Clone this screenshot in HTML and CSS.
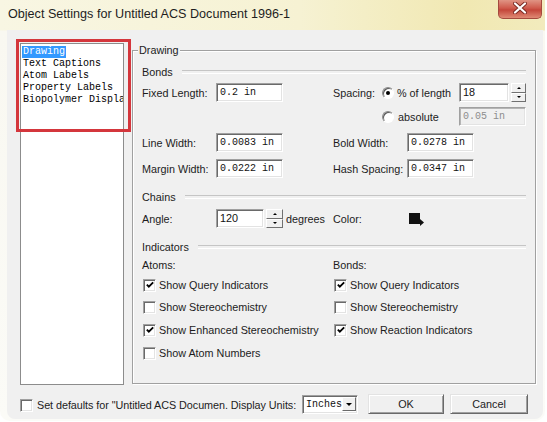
FILE: index.html
```html
<!DOCTYPE html>
<html>
<head>
<meta charset="utf-8">
<title>Object Settings</title>
<link rel="stylesheet" href="styles.css">
</head>
<body>
<div class="window">
  <div class="titlebar">
    <span class="title">Object Settings for Untitled ACS Document 1996-1</span>
    <span class="close">
      <svg width="14" height="12" viewBox="0 0 14 12"><path d="M2 1.5 L12 10.5 M12 1.5 L2 10.5" stroke="#7a2a22" stroke-width="4" stroke-linecap="round"/><path d="M2 1.5 L12 10.5 M12 1.5 L2 10.5" stroke="#ffffff" stroke-width="2.2" stroke-linecap="round"/></svg>
    </span>
  </div>
  <div class="client">
    <div class="main">
      <div class="listbox">
        <div class="item sel">Drawing</div>
        <div class="item">Text Captions</div>
        <div class="item">Atom Labels</div>
        <div class="item">Property Labels</div>
        <div class="item">Biopolymer Display</div>
      </div>
      <div class="group">
        <div class="legend">Drawing</div>

        <div class="heading mt-bonds">Bonds</div>

        <div class="row mt-r1">
          <span class="lbl">Fixed Length:</span>
          <span class="field w67 mono">0.2 in</span>
          <span class="lbl lbl-spacing">Spacing:</span>
          <span class="radio on"></span>
          <span class="rtext w62">% of length</span>
          <span class="field w50">18</span>
          <span class="spin w15"><i class="up"></i><i class="dn"></i></span>
        </div>

        <div class="row mt-r2">
          <span class="pad240"></span>
          <span class="radio"></span>
          <span class="rtext2">absolute</span>
          <span class="field w67 mono disabled">0.05 in</span>
        </div>

        <div class="row mt-r3">
          <span class="lbl">Line Width:</span>
          <span class="field w67 mono">0.0083 in</span>
          <span class="lbl lbl-right">Bold Width:</span>
          <span class="field w67 mono">0.0278 in</span>
        </div>

        <div class="row mt-r4">
          <span class="lbl">Margin Width:</span>
          <span class="field w67 mono">0.0222 in</span>
          <span class="lbl lbl-right">Hash Spacing:</span>
          <span class="field w67 mono">0.0347 in</span>
        </div>

        <div class="heading mt-chains">Chains</div>

        <div class="row mt-angle">
          <span class="lbl">Angle:</span>
          <span class="field w48">120</span>
          <span class="spin w17"><i class="up"></i><i class="dn"></i></span>
          <span class="degrees">degrees</span>
          <span class="lbl-color">Color:</span>
          <svg class="swatch" width="17" height="14" viewBox="0 0 17 14"><rect x="0" y="0" width="11" height="11" fill="#111"/><path d="M11 6 L15 9.5 L11 13 Z" fill="#111"/></svg>
        </div>

        <div class="heading mt-ind">Indicators</div>

        <div class="crow mt-sub">
          <span class="cell">Atoms:</span>
          <span class="cell">Bonds:</span>
        </div>

        <div class="crow mt-c1">
          <span class="cell"><span class="cb on"><svg width="11" height="11" viewBox="0 0 11 11"><path d="M2 4.5 L4.2 6.8 L9 2" fill="none" stroke="#000" stroke-width="2"/></svg></span><span class="ctext">Show Query Indicators</span></span>
          <span class="cell"><span class="cb on"><svg width="11" height="11" viewBox="0 0 11 11"><path d="M2 4.5 L4.2 6.8 L9 2" fill="none" stroke="#000" stroke-width="2"/></svg></span><span class="ctext">Show Query Indicators</span></span>
        </div>
        <div class="crow mt-c2">
          <span class="cell"><span class="cb"></span><span class="ctext">Show Stereochemistry</span></span>
          <span class="cell"><span class="cb"></span><span class="ctext">Show Stereochemistry</span></span>
        </div>
        <div class="crow mt-c3">
          <span class="cell"><span class="cb on"><svg width="11" height="11" viewBox="0 0 11 11"><path d="M2 4.5 L4.2 6.8 L9 2" fill="none" stroke="#000" stroke-width="2"/></svg></span><span class="ctext">Show Enhanced Stereochemistry</span></span>
          <span class="cell"><span class="cb on"><svg width="11" height="11" viewBox="0 0 11 11"><path d="M2 4.5 L4.2 6.8 L9 2" fill="none" stroke="#000" stroke-width="2"/></svg></span><span class="ctext">Show Reaction Indicators</span></span>
        </div>
        <div class="crow mt-c4">
          <span class="cell"><span class="cb"></span><span class="ctext">Show Atom Numbers</span></span>
        </div>
      </div>
    </div>

    <div class="footer">
      <span class="cb"></span>
      <span class="ftext">Set defaults for "Untitled ACS Documen. Display Units:</span>
      <span class="select"><span class="seltext">Inches</span><span class="selbtn"></span></span>
      <span class="btn ok">OK</span>
      <span class="btn cancel">Cancel</span>
    </div>

    <div class="annot"></div>
  </div>
</div>
</body>
</html>
```

FILE: styles.css
```css
* { box-sizing: border-box; }
html, body { margin: 0; padding: 0; }
body {
  width: 547px;
  height: 422px;
  background: #ffffff;
  font-family: "Liberation Sans", Arial, sans-serif;
  font-size: 10.8px;
  color: #1c1c1c;
  overflow: hidden;
}

.window {
  width: 545px;
  height: 421px;
  background:
    linear-gradient(180deg, rgba(255,255,255,0) 0px, rgba(255,255,255,0) 30px, #f9f8f1 31px, #fbfbf7 100%),
    linear-gradient(90deg, #f8f6e3 0%, #f6f2d3 55%, #f1e8b2 85%, #f2ebbd 100%);
  border-radius: 0 0 10px 10px;
  display: flex;
  flex-direction: column;
}

.titlebar {
  height: 30px;
  flex: none;
  display: flex;
  justify-content: space-between;
  align-items: flex-start;
  padding-left: 8px;
}
.title {
  font-size: 12.6px;
  line-height: 28px;
  color: #1e1e1e;
}
.close {
  width: 44px;
  height: 19px;
  margin-right: 3px;
  border: 1px solid #a44a3e;
  border-top: none;
  border-radius: 0 0 5px 5px;
  background: linear-gradient(180deg, #e09484 0%, #cf5a4c 45%, #c4463a 55%, #df8a74 100%);
  display: flex;
  align-items: center;
  justify-content: center;
}
.close svg { display: block; margin-top: -2px; }

.client {
  position: relative;
  margin-left: 7px;
  width: 536px;
  height: 389px;
  background: #f0f0f0;
  border-radius: 0 0 8px 8px;
}

.main {
  display: flex;
  align-items: flex-start;
  padding: 13px 0 0 13px;
  height: 355px;
}

.listbox {
  width: 104px;
  height: 342px;
  flex: none;
  background: #ffffff;
  border: 1px solid #8c8c8c;
  padding: 2px 0 0 1px;
  overflow: hidden;
  font-family: "Liberation Mono", "Courier New", monospace;
  font-size: 10px;
  line-height: 12px;
}
.item {
  width: max-content;
  padding: 0 1px;
  color: #000;
  white-space: nowrap;
}
.item.sel {
  background: #3399ff;
  color: #ffffff;
}

.group {
  margin: 7px 0 0 8px;
  width: 404px;
  height: 334px;
  flex: none;
  border: 1px solid #a0a0a0;
  box-shadow: inset 1px 1px 0 #ffffff, 1px 1px 0 #ffffff;
  padding: 0 9px;
}
.legend {
  width: max-content;
  height: 14px;
  line-height: 14px;
  margin: -8px 0 0 -4px;
  padding: 0 1px;
  background: #f0f0f0;
}

.heading {
  display: flex;
  align-items: center;
  gap: 9px;
  height: 14px;
  line-height: 14px;
}
.heading::after {
  content: "";
  flex: 1;
  height: 2px;
  border-top: 1px solid #c5c5c5;
  border-bottom: 1px solid #ffffff;
}

.mt-bonds { margin-top: 8px; }
.mt-r1 { margin-top: 4px; }
.mt-r2 { margin-top: 5px; }
.mt-r3 { margin-top: 7px; }
.mt-r4 { margin-top: 7px; }
.mt-chains { margin-top: 12px; }
.mt-angle { margin-top: 5px; }
.mt-ind { margin-top: 12px; }
.mt-sub { margin-top: 4px; }
.mt-c1 { margin-top: 6px; }
.mt-c2 { margin-top: 8px; }
.mt-c3 { margin-top: 9px; }
.mt-c4 { margin-top: 9px; }

.row {
  display: flex;
  align-items: center;
  height: 19px;
}
.lbl { width: 74px; flex: none; white-space: nowrap; }
.lbl-spacing { width: 49px; margin-left: 50px; }
.lbl-right { margin-left: 50px; }
.pad240 { width: 240px; flex: none; }

.field {
  height: 19px;
  flex: none;
  background: #ffffff;
  border: 1px solid;
  border-color: #a0a0a0 #ffffff #ffffff #a0a0a0;
  box-shadow: inset 1px 1px 0 #6a6a6a, inset -1px -1px 0 #e3e3e3;
  padding: 0 2px 0 3px;
  line-height: 17px;
  color: #111;
  white-space: nowrap;
  overflow: hidden;
}
.mono {
  font-family: "Liberation Mono", "Courier New", monospace;
  font-size: 10px;
}
.field.disabled {
  background: #f0f0f0;
  color: #8d8d8d;
  box-shadow: inset 1px 1px 0 #b5b5b5, inset -1px -1px 0 #e3e3e3;
}
.w67 { width: 67px; }
.w50 { width: 50px; }
.w48 { width: 48px; }
.w62 { width: 62px; }

.radio {
  width: 12px;
  height: 12px;
  flex: none;
  border-radius: 50%;
  background: #ffffff;
  border: 1px solid;
  border-color: #8a8a8a #ffffff #ffffff #8a8a8a;
  box-shadow: inset 1px 1px 0 #5a5a5a;
  display: flex;
  align-items: center;
  justify-content: center;
}
.radio.on::after {
  content: "";
  width: 4px;
  height: 4px;
  border-radius: 50%;
  background: #000;
}
.rtext { margin-left: 3px; flex: none; white-space: nowrap; }
.rtext2 { margin-left: 4px; width: 61px; flex: none; }

.spin {
  height: 19px;
  margin-left: 2px;
  flex: none;
  display: flex;
  flex-direction: column;
}
.w15 { width: 15px; }
.w17 { width: 17px; }
.spin i {
  flex: 1;
  display: flex;
  align-items: center;
  justify-content: center;
  background: #f0f0f0;
  border: 1px solid;
  border-color: #ffffff #707070 #707070 #ffffff;
}
.spin i.up::after {
  content: "";
  border-left: 2px solid transparent;
  border-right: 2px solid transparent;
  border-bottom: 2px solid #000;
}
.spin i.dn::after {
  content: "";
  border-left: 2px solid transparent;
  border-right: 2px solid transparent;
  border-top: 2px solid #000;
}

.degrees { margin-left: 3px; width: 47px; flex: none; }
.lbl-color { width: 76px; flex: none; }
.swatch { display: block; margin-top: 3px; }

.crow {
  display: flex;
  align-items: center;
  height: 14px;
}
.cell {
  width: 191px;
  flex: none;
  display: flex;
  align-items: center;
  white-space: nowrap;
}

.cb {
  width: 13px;
  height: 13px;
  flex: none;
  margin-left: 1px;
  background: #ffffff;
  border: 1px solid;
  border-color: #a0a0a0 #ffffff #ffffff #a0a0a0;
  box-shadow: inset 1px 1px 0 #6a6a6a, inset -1px -1px 0 #e3e3e3;
  display: flex;
  align-items: center;
  justify-content: center;
}
.cb svg { display: block; margin: 1px 0 0 1px; }
.ctext { margin-left: 3px; }

.footer {
  display: flex;
  align-items: center;
  height: 20px;
  margin-top: 9px;
  padding-left: 12px;
}
.footer .cb { margin-top: 3px; }
.ftext {
  margin-left: 4px;
  width: 262px;
  flex: none;
  white-space: nowrap;
  margin-top: 1px;
  letter-spacing: -0.05px;
}
.select {
  margin-left: 3px;
  width: 56px;
  height: 19px;
  flex: none;
  display: flex;
  align-items: center;
  justify-content: space-between;
  background: #ffffff;
  border: 1px solid;
  border-color: #a0a0a0 #ffffff #ffffff #a0a0a0;
  box-shadow: inset 1px 1px 0 #6a6a6a, inset -1px -1px 0 #e3e3e3;
  padding: 2px 2px 2px 3px;
  font-family: "Liberation Mono", "Courier New", monospace;
  font-size: 10px;
  color: #111;
}
.selbtn {
  width: 14px;
  height: 14px;
  flex: none;
  background: #f0f0f0;
  border: 1px solid;
  border-color: #ffffff #6a6a6a #6a6a6a #ffffff;
  display: flex;
  align-items: center;
  justify-content: center;
}
.selbtn::after {
  content: "";
  border-left: 3px solid transparent;
  border-right: 3px solid transparent;
  border-top: 3px solid #000;
}

.btn {
  height: 20px;
  flex: none;
  display: flex;
  align-items: center;
  justify-content: center;
  background: #f0f0f0;
  border: 1px solid;
  border-color: #e3e3e3 #696969 #696969 #e3e3e3;
  box-shadow: inset 1px 1px 0 #ffffff, inset -1px -1px 0 #a0a0a0;
  color: #1c1c1c;
}
.ok { width: 76px; margin-left: 10px; }
.cancel { width: 78px; margin-left: 6px; }

.annot {
  position: absolute;
  left: 9px;
  top: 9px;
  width: 115px;
  height: 93px;
  border: 3px solid #d4363c;
  pointer-events: none;
}
```
